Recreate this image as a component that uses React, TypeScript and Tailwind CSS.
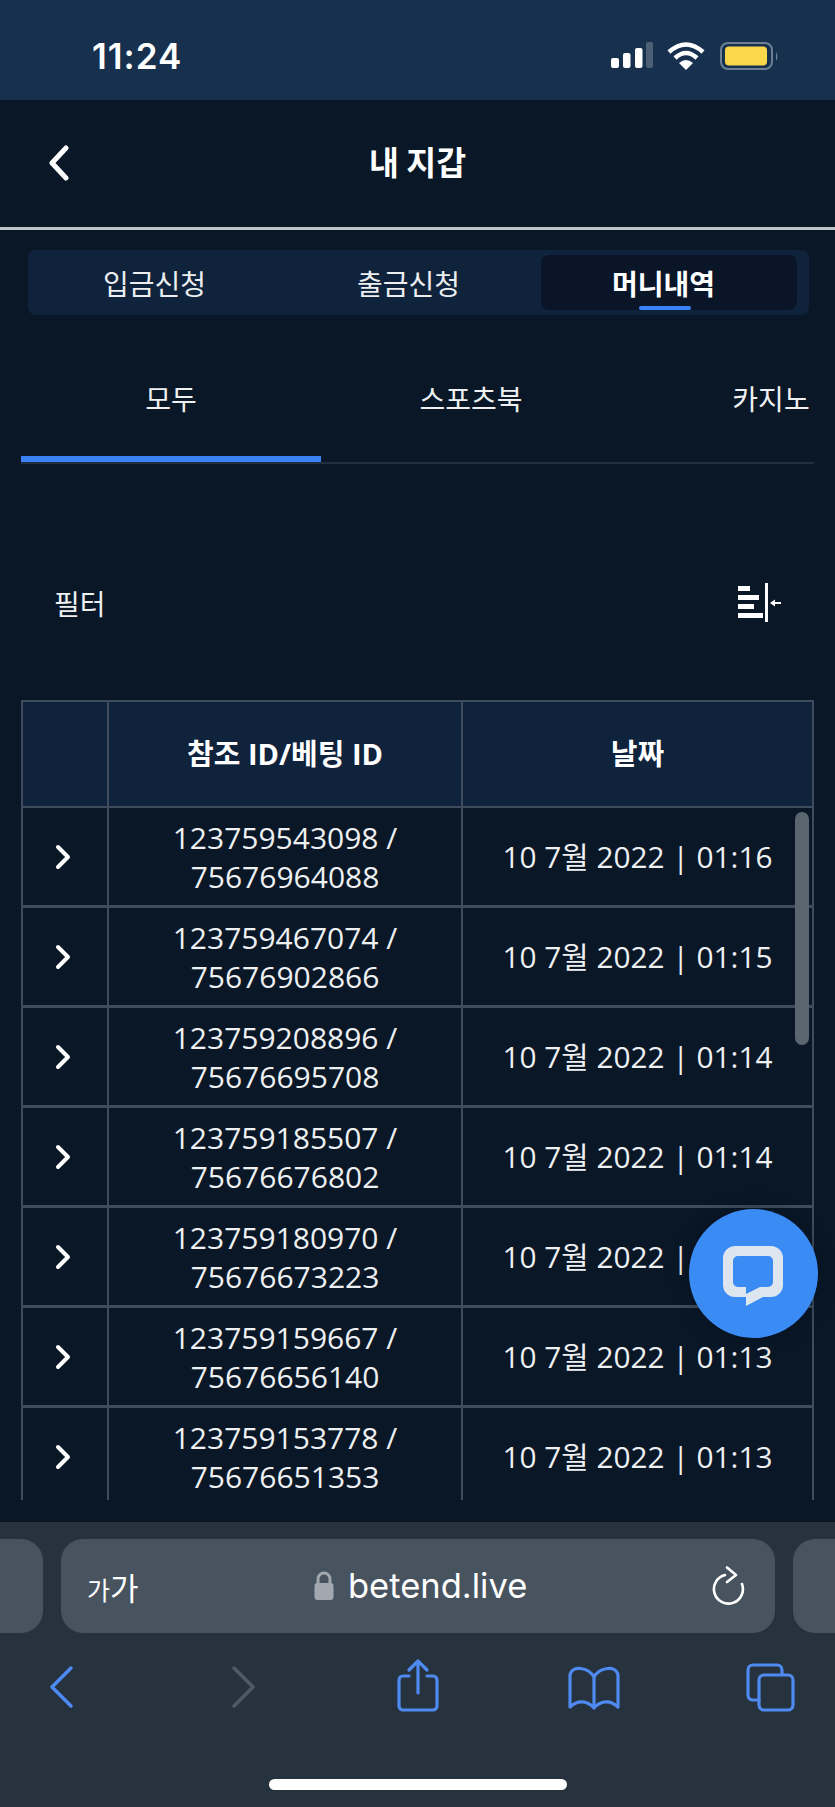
import React from "react";

const rows = [
  ["123759543098", "75676964088", "01:16"],
  ["123759467074", "75676902866", "01:15"],
  ["123759208896", "75676695708", "01:14"],
  ["123759185507", "75676676802", "01:14"],
  ["123759180970", "75676673223", "01:14"],
  ["123759159667", "75676656140", "01:13"],
  ["123759153778", "75676651353", "01:13"],
];

const font = "font-['Open_Sans','Noto_Sans_CJK_KR',sans-serif]";

function StatusBar() {
  return (
    <div className="h-[100px] shrink-0 bg-[#17304d] flex items-center justify-between pl-[92px] pr-[54px] pt-[12px]">
      <span className="font-['Inter',sans-serif] text-[35px] font-semibold text-white leading-none tracking-[1px]">11:24</span>
      <svg width="170" height="30" viewBox="0 0 170 30">
        <rect x="0" y="17" width="8" height="10" rx="2" fill="#fff" />
        <rect x="12" y="12" width="7.5" height="15" rx="2" fill="#fff" />
        <rect x="24" y="7" width="7.5" height="20" rx="2" fill="#fff" />
        <rect x="35" y="1" width="7" height="26" rx="2" fill="#4c5f74" />
        <path d="M58 11 Q75 -4 92 11" fill="none" stroke="#fff" strokeWidth="4.5" />
        <path d="M64 17 Q75 7 86 17" fill="none" stroke="#fff" strokeWidth="4.5" />
        <path d="M68 22 Q75 16 82 22 L75 29 Z" fill="#fff" />
        <rect x="110" y="2" width="51" height="26" rx="7" fill="none" stroke="#6d7f93" strokeWidth="2" />
        <rect x="114" y="5.5" width="42" height="19" rx="4" fill="#fbd84a" />
        <path d="M165 11 Q168 15 165 20 Z" fill="#6d7f93" />
      </svg>
    </div>
  );
}

function Chevron() {
  return (
    <svg width="20" height="30" viewBox="0 0 20 30" fill="none" stroke="#fff" strokeWidth="4" strokeLinecap="round" strokeLinejoin="round">
      <path d="M5 5 L15 15 L5 25" />
    </svg>
  );
}

function Row({ r }: { r: string[] }) {
  return (
    <div className="flex h-[100px] shrink-0 border-b-[3px] border-[#3e4c5e] text-[#eef0f2] text-[30px] leading-[39px]">
      <div className="w-[86px] shrink-0 border-r-2 border-[#3e4c5e] flex items-center justify-center pr-[4px]">
        <Chevron />
      </div>
      <div className="w-[354px] shrink-0 border-r-2 border-[#3e4c5e] flex flex-col items-center justify-center">
        <span>{r[0]} /</span>
        <span>{r[1]}</span>
      </div>
      <div className="flex-1 flex items-center justify-center text-[29.8px]">10 7월 2022 | {r[2]}</div>
    </div>
  );
}

function BottomBar() {
  return (
    <div className="absolute left-0 right-0 top-[1522px] bottom-0 bg-[#26333f]">
      <div className="flex h-[94px] mt-[17px] gap-[18px] -ml-[40px]">
        <div className="w-[83px] shrink-0 rounded-[22px] bg-[#47535f]" />
        <div className="w-[714px] shrink-0 rounded-[22px] bg-[#47535f] flex items-center justify-between pl-[26px] pr-[30px] relative">
          <span className="font-['Noto_Sans_CJK_KR',sans-serif] text-white text-[31px] leading-none">
            <span className="text-[25px]">가</span>가
          </span>
          <div className="flex items-center gap-[14px] absolute left-[253px] top-[17px]">
            <svg width="20" height="30" viewBox="0 0 20 30">
              <path d="M4 13 V8 a6 6 0 0 1 12 0 V13" fill="none" stroke="#a2a8b0" strokeWidth="3" />
              <rect x="0.5" y="12" width="19" height="17" rx="3" fill="#a2a8b0" />
            </svg>
            <span className="font-['Inter',sans-serif] text-white text-[34.5px] leading-[60px]">betend.live</span>
          </div>
          <svg width="34" height="40" viewBox="0 0 34 40" fill="none" stroke="#fff" strokeWidth="2.6" strokeLinecap="round" strokeLinejoin="round">
            <path d="M14 9 A14.5 14.5 0 1 0 31 18" />
            <path d="M16 1.5 L25 9 L16 16" />
          </svg>
        </div>
        <div className="w-[83px] shrink-0 rounded-[22px] bg-[#47535f]" />
      </div>
      <svg className="block" width="835" height="90" viewBox="0 0 835 90" fill="none" strokeLinecap="round" strokeLinejoin="round">
        <path d="M71 35 L52 54 L71 73" stroke="#4f8af0" strokeWidth="3.5" />
        <path d="M234 35 L253 54 L234 73" stroke="#4e5a65" strokeWidth="3.5" />
        <g stroke="#4f8af0" strokeWidth="3.2">
          <path d="M409 43 H403 a4 4 0 0 0 -4 4 V73 a4 4 0 0 0 4 4 H433 a4 4 0 0 0 4 -4 V47 a4 4 0 0 0 -4 -4 H427" />
          <path d="M418 60 V28 M409 37 L418 28 L427 37" />
          <path d="M594 44 C588 34 572 32 570 42 V74 C578 66 588 68 594 75 C600 68 610 66 618 74 V42 C616 32 600 34 594 44 Z M594 44 V74" />
          <path d="M759 67 H753 a5 5 0 0 1 -5 -5 V37 a5 5 0 0 1 5 -5 H777 a5 5 0 0 1 5 5 V41" />
          <rect x="759" y="42" width="34" height="35" rx="5" />
        </g>
      </svg>
      <div className="absolute left-[269px] top-[257px] w-[298px] h-[11px] rounded-full bg-white" />
    </div>
  );
}

export default function App() {
  return (
    <div className={`relative w-[835px] h-[1807px] overflow-hidden bg-[#091727] text-white ${font}`}>
      <StatusBar />
      <div className="relative h-[130px] border-b-[3px] border-[#c0c3c5] flex items-center justify-center pb-[5px]">
        <span className="font-bold text-[32.5px] leading-none font-['Noto_Sans_CJK_KR',sans-serif]">내 지갑</span>
        <svg className="absolute left-[46px] top-[45px]" width="26" height="36" viewBox="0 0 26 36" fill="none" stroke="#fff" strokeWidth="5" strokeLinecap="round" strokeLinejoin="round">
          <path d="M20 3 L6 18 L20 33" />
        </svg>
      </div>
      <div className="ml-[28px] mr-[26px] mt-[20px] h-[65px] rounded-[8px] bg-[#10233c] flex p-[5px] pr-[12px] items-stretch font-['Noto_Sans_CJK_KR',sans-serif] text-[28px]">
        <div className="w-[243px] flex items-center justify-center text-[#eceef0]">입금신청</div>
        <div className="w-[265px] flex items-center justify-center text-[#eceef0]">출금신청</div>
        <div className="relative flex-1 rounded-[8px] bg-[#0a1628] flex items-center justify-center font-bold pr-[11px]">
          머니내역
          <div className="absolute left-[98px] bottom-0 w-[52px] h-[4px] rounded-full bg-[#3b82f6]" />
        </div>
      </div>
      <div className="mx-[21px] mt-[24px] h-[125px] flex flex-col font-['Noto_Sans_CJK_KR',sans-serif] text-[28px] text-[#eef0f2]">
        <div className="flex-1 flex items-center overflow-hidden">
          <div className="w-[300px] shrink-0 flex justify-center">모두</div>
          <div className="w-[300px] shrink-0 flex justify-center">스포츠북</div>
          <div className="w-[300px] shrink-0 flex justify-center">카지노</div>
        </div>
        <div className="relative h-[8px] shrink-0">
          <div className="absolute left-0 bottom-0 w-full h-[2px] bg-[#212e3e]" />
          <div className="absolute left-0 top-0 w-[300px] h-[6px] bg-[#3b82f6]" />
        </div>
      </div>
      <div className="ml-[54px] mr-[54px] mt-[119px] h-[39px] flex items-center justify-between font-['Noto_Sans_CJK_KR',sans-serif] text-[28px] text-[#eef0f2]">
        <span>필터</span>
        <svg width="43" height="40" viewBox="0 0 43 40">
          <rect x="0" y="3" width="12" height="5" fill="#fff" />
          <rect x="0" y="12" width="21" height="5" fill="#fff" />
          <rect x="0" y="21" width="16" height="5" fill="#fff" />
          <rect x="0" y="30" width="25" height="5" fill="#fff" />
          <rect x="27" y="0" width="3" height="39" fill="#fff" />
          <path d="M32 20 L37 16.5 V19 H43 V21 H37 V23.5 Z" fill="#fff" />
        </svg>
      </div>
      <div className="relative ml-[21px] mr-[21px] mt-[78px] h-[800px] overflow-hidden border-x-2 border-t-2 border-[#3e4c5e]">
        <div className="flex h-[106px] bg-[#10233c] border-b-2 border-[#3e4c5e] text-[29px] font-bold">
          <div className="w-[86px] shrink-0 border-r-2 border-[#3e4c5e]" />
          <div className="w-[354px] shrink-0 border-r-2 border-[#3e4c5e] flex items-center justify-center">참조 ID/베팅 ID</div>
          <div className="flex-1 flex items-center justify-center">날짜</div>
        </div>
        {rows.map((r) => (
          <Row key={r[0]} r={r} />
        ))}
        <div className="flex h-[50px]">
          <div className="w-[86px] shrink-0 border-r-2 border-[#3e4c5e]" />
          <div className="w-[354px] shrink-0 border-r-2 border-[#3e4c5e]" />
        </div>
      </div>
      <div className="absolute left-[795px] top-[812px] w-[14px] h-[233px] rounded-full bg-[#5a6570]" />
      <div className="absolute left-[689px] top-[1209px] w-[129px] h-[129px] rounded-full bg-[#3b8bf5] shadow-[0_0_20px_rgba(0,0,0,0.25)] flex items-center justify-center">
        <svg width="129" height="129" viewBox="0 0 129 129">
          <path
            fillRule="evenodd"
            fill="#dde6ef"
            d="M47 37 H82 A12 12 0 0 1 94 49 V76 A12 12 0 0 1 82 88 H74 L57 97 V88 H46 A12 12 0 0 1 34 76 V49 A12 12 0 0 1 47 37 Z M49 47 A5 5 0 0 0 44 52 V73 A5 5 0 0 0 49 78 H57 V85 L71 78 H79 A5 5 0 0 0 84 73 V52 A5 5 0 0 0 79 47 Z"
          />
        </svg>
      </div>
      <BottomBar />
    </div>
  );
}
